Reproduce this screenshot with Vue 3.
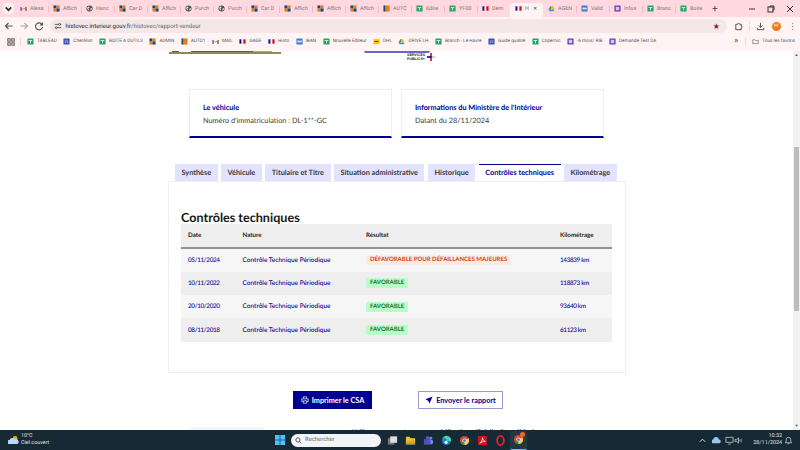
<script setup>
const tabs = [
  ['gmail', 'Alessa'], ['orange', 'Affich'], ['globe', 'Hanc'], ['orange', 'Car D'], ['orange', 'Affich'],
  ['globe', 'Purch'], ['globe', 'Purch'], ['orange', 'Car D'], ['orange', 'Affich'], ['orange', 'Affich'],
  ['orange', 'Affich'], ['auto', 'AUTC'], ['sheet', 'Edite'], ['sheet', 'YF00'], ['flag', 'Dem'],
  ['flag', 'H', true], ['drive', 'AGEN'], ['doc', 'Valid'], ['form', 'Infos'], ['sheet', 'Branc'], ['sheet', 'Boite']
]

const bookmarks = [
  ['sheet', 'TABLEAU'], ['cal', 'Checklist'], ['sheet', 'BOITE A OUTILS'], ['orange', 'ADMIN'], ['auto', 'AUTO1'],
  ['gmail', 'MAIL'], ['flag', 'GAGE'], ['flag', 'Histo'], ['doc', 'IBAN'], ['sheet', 'Nouvelle Editeur'],
  ['dhl', 'DHL'], ['drive', 'DRIVE LH'], ['sheet', 'Branch - Le Havre'], ['cal', 'Guide qualité'], ['sheet', 'Copernic'],
  ['form', '-6 mois/ RIB'], ['form', 'Demande Test DA']
]

const sections = [
  'Synthèse', 'Véhicule', 'Titulaire et Titre', 'Situation administrative', 'Historique', 'Contrôles techniques', 'Kilométrage'
]

const rows = [
  { date: '05/11/2024', result: 'DÉFAVORABLE POUR DÉFAILLANCES MAJEURES', bad: true, km: '143839 km' },
  { date: '10/11/2022', result: 'FAVORABLE', bad: false, km: '118873 km' },
  { date: '20/10/2020', result: 'FAVORABLE', bad: false, km: '93640 km' },
  { date: '08/11/2018', result: 'FAVORABLE', bad: false, km: '61123 km' }
]
</script>

<template>
  <div class="screen">
    <svg class="defs">
      <symbol id="i-gmail" viewBox="0 0 16 16">
        <path d="M1 13V4l7 5 7-5v9h-3V7.500L8 10.500 4 7.500V13z" fill="#e33b2e"/>
        <path d="M1 13V4l3 2.200V13z" fill="#4285f4"/>
        <path d="M15 13V4l-3 2.200V13z" fill="#34a853"/>
      </symbol>
      <symbol id="i-orange" viewBox="0 0 16 16">
        <rect x="1" y="1" width="7" height="7" fill="#0f4c81"/>
        <rect x="8" y="1" width="7" height="7" fill="#ee7d11"/>
        <rect x="1" y="8" width="7" height="7" fill="#ee7d11"/>
        <rect x="8" y="8" width="7" height="7" fill="#0f4c81"/>
      </symbol>
      <symbol id="i-auto" viewBox="0 0 16 16">
        <rect x="1" y="1" width="5" height="14" fill="#0f4c81"/>
        <rect x="6" y="1" width="9" height="14" fill="#ee7d11"/>
      </symbol>
      <symbol id="i-globe" viewBox="0 0 16 16">
        <circle cx="8" cy="8" r="7" fill="#4a4a4e"/>
        <path d="M3 5l4-2 1 3-3 2 2 2-1 3-3-4zM10 8l4-1-1 4-3 2z" fill="#e4e4e6"/>
      </symbol>
      <symbol id="i-sheet" viewBox="0 0 16 16">
        <rect x="1" y="1" width="14" height="14" rx="1" fill="#23a566"/>
        <path d="M4 5h8v2H9v5H7V7H4z" fill="#fff"/>
      </symbol>
      <symbol id="i-cal" viewBox="0 0 16 16">
        <rect x="1" y="1" width="14" height="14" rx="1" fill="#3f51b5"/>
        <path d="M4 6h8v1.500H4zM4 9h3v1.500H4zM9 9h3v1.500H9z" fill="#fff"/>
      </symbol>
      <symbol id="i-flag" viewBox="0 0 16 16">
        <rect x="1" y="3" width="5" height="10" fill="#14148c"/>
        <rect x="6" y="3" width="4" height="10" fill="#f4f4f8"/>
        <rect x="10" y="3" width="5" height="10" fill="#e1000f"/>
      </symbol>
      <symbol id="i-doc" viewBox="0 0 16 16">
        <rect x="1" y="1" width="14" height="14" rx="1" fill="#3e7bd6"/>
        <rect x="3" y="6" width="10" height="4" fill="#dbe7fa"/>
      </symbol>
      <symbol id="i-form" viewBox="0 0 16 16">
        <rect x="1" y="1" width="14" height="14" rx="1" fill="#673ab7"/>
        <rect x="4" y="4" width="8" height="8" fill="#d6c8f0"/>
      </symbol>
      <symbol id="i-dhl" viewBox="0 0 16 16">
        <rect x="1" y="2" width="14" height="12" rx="1" fill="#fc0"/>
        <rect x="3" y="7" width="10" height="2" fill="#d40511"/>
      </symbol>
      <symbol id="i-drive" viewBox="0 0 16 16">
        <path d="M5.500 2h5L6 10H1z" fill="#1fa463"/>
        <path d="M10.500 2L15 10h-5L5.500 2z" fill="#ffba00"/>
        <path d="M1 10h14l-2.500 4h-9z" fill="#4285f4"/>
      </symbol>
    </svg>

    <div class="tabstrip">
      <div class="tab-menu">
        <svg viewBox="0 0 10 10"><path d="M2.500 4L5 6.500 7.500 4" fill="none" stroke="#333" stroke-width="1.600"/></svg>
      </div>
      <div v-for="(tab, i) in tabs" :key="i" class="tab" :class="{ active: tab[2] }">
        <svg class="fav"><use :href="'#i-' + tab[0]"/></svg>
        <span class="tab-name">{{ tab[1] }}</span>
        <span v-if="tab[2]" class="tab-x">✕</span>
      </div>
      <span class="tab-plus">+</span>
      <div class="win-btns">
        <svg viewBox="0 0 10 10"><path d="M2 5h6" stroke="#333" fill="none"/></svg>
        <svg viewBox="0 0 10 10"><rect x="2" y="3" width="5" height="5" stroke="#333" fill="none"/><path d="M4 3V2h4v4H7" stroke="#333" fill="none"/></svg>
        <svg viewBox="0 0 10 10"><path d="M2 2l6 6M8 2l-6 6" stroke="#333" fill="none"/></svg>
      </div>
    </div>

    <div class="toolbar">
      <svg class="nav" viewBox="0 0 10 10"><path d="M8.500 5h-7M4.500 2L1.500 5l3 3" fill="none" stroke="#555" stroke-width="1.100"/></svg>
      <svg class="nav" viewBox="0 0 10 10"><path d="M1.500 5h7M5.500 2l3 3-3 3" fill="none" stroke="#aaa" stroke-width="1.100"/></svg>
      <svg class="nav" viewBox="0 0 10 10"><path d="M8 3.500A3.500 3.500 0 1 0 8.500 6M8.500 1.500v2.500H6" fill="none" stroke="#555" stroke-width="1.100"/></svg>
      <div class="omnibox">
        <svg class="site" viewBox="0 0 10 10"><path d="M1 3h5M8 3h1M1 7h1M4 7h5" stroke="#444" fill="none"/><circle cx="7" cy="3" r="1.200" fill="none" stroke="#444"/><circle cx="3" cy="7" r="1.200" fill="none" stroke="#444"/></svg>
        <span class="url">histovec.interieur.gouv.fr<span class="url-path">/histovec/rapport-vendeur</span></span>
        <span class="star">★</span>
      </div>
      <svg class="tool" viewBox="0 0 10 10"><path d="M2 2.500h2.200a1 1 0 0 1 2 0H8v2a1 1 0 0 1 0 2v2H2z" fill="none" stroke="#444"/></svg>
      <span class="tool-sep"></span>
      <svg class="tool dl" viewBox="0 0 10 10"><path d="M5 1v5M3 4l2 2 2-2M1.500 6.500v2h7v-2" fill="none" stroke="#444"/></svg>
      <span class="avatar">M</span>
      <span class="dots">⋮</span>
    </div>

    <div class="bookmarks">
      <svg class="apps" viewBox="0 0 10 10"><g fill="none" stroke="#555" stroke-width="1.200"><rect x="1" y="1" width="3" height="3"/><rect x="6" y="1" width="3" height="3"/><rect x="1" y="6" width="3" height="3"/><rect x="6" y="6" width="3" height="3"/></g></svg>
      <span class="bm-sep"></span>
      <div v-for="(bm, i) in bookmarks" :key="i" class="bm">
        <svg class="fav"><use :href="'#i-' + bm[0]"/></svg>
        <span>{{ bm[1] }}</span>
      </div>
      <span class="bm-more">»</span>
      <span class="bm-sep2"></span>
      <div class="bm">
        <svg class="folder" viewBox="0 0 10 10"><path d="M1 2.500h3l1 1h4v4.500H1z" fill="none" stroke="#555" stroke-width=".8"/></svg>
        <span>Tous les favoris</span>
      </div>
    </div>

    <div class="viewport">
      <main class="page">
        <div class="page-top">
          <div class="top-img"></div>
          <div class="top-right">
            <div class="top-line"></div>
            <div class="services">
              <span>SERVICES<br>PUBLICS+</span>
              <svg viewBox="0 0 10 10"><path d="M4 0h2v10H4z" fill="#e1000f"/><path d="M0 4h6v2H0z" fill="#000091"/><path d="M6 4h4v2H6z" fill="#f7a8b8"/></svg>
            </div>
          </div>
        </div>

        <div class="cards">
          <div class="card">
            <div class="card-title">Le véhicule</div>
            <div class="card-text">Numéro d'immatriculation : DL-1**-GC</div>
          </div>
          <div class="card">
            <div class="card-title">Informations du Ministère de l'Intérieur</div>
            <div class="card-text">Datant du 28/11/2024</div>
          </div>
        </div>

        <div class="sections">
          <div v-for="name in sections" :key="name" class="section" :class="{ current: name === 'Contrôles techniques' }">{{ name }}</div>
        </div>

        <section class="panel">
          <h2>Contrôles techniques</h2>
          <table>
            <thead>
              <tr>
                <th class="c-date">Date</th>
                <th class="c-nature">Nature</th>
                <th class="c-result">Résultat</th>
                <th>Kilométrage</th>
              </tr>
            </thead>
            <tbody>
              <tr v-for="row in rows" :key="row.date">
                <td class="num">{{ row.date }}</td>
                <td>Contrôle Technique Périodique</td>
                <td><span class="badge" :class="{ bad: row.bad }">{{ row.result }}</span></td>
                <td class="num">{{ row.km }}</td>
              </tr>
            </tbody>
          </table>
        </section>

        <div class="actions">
          <button class="btn primary">
            <svg viewBox="0 0 10 10"><path d="M3 3V1h4v2M2.500 7H1V3.500h8V7H7.500M3 6h4v3H3z" fill="none" stroke="#fff" stroke-width=".9"/></svg>
            Imprimer le CSA
          </button>
          <button class="btn outline">
            <svg viewBox="0 0 10 10"><path d="M9.500 .5L.5 4.200l3.500 1.600L5.600 9.500z" fill="#000091"/></svg>
            Envoyer le rapport
          </button>
        </div>

        <div class="page-foot">
          <span class="foot-box"></span>
          <span class="foot-text">Utilisez ce rapport pour une vérification officielle d'un véhicule</span>
        </div>
      </main>
      <div class="scrollbar">
        <span class="arrow">▲</span>
        <div class="track"><div class="thumb"></div></div>
        <span class="arrow">▼</span>
      </div>
    </div>

    <footer class="taskbar">
      <div class="weather">
        <svg viewBox="0 0 14 12"><circle cx="9" cy="4" r="3" fill="#f5a623"/><path d="M1 11a2.500 2.500 0 0 1 1-5 3.500 3.500 0 0 1 6.500-.5A3 3 0 0 1 12 11z" fill="#b9daf5"/></svg>
        <div>
          <div class="w-temp">10°C</div>
          <div>Ciel couvert</div>
        </div>
      </div>
      <div class="dock">
        <svg class="win" viewBox="0 0 10 10"><g fill="#4cc2ff"><rect width="4.700" height="4.700"/><rect x="5.300" width="4.700" height="4.700"/><rect y="5.300" width="4.700" height="4.700"/><rect x="5.300" y="5.300" width="4.700" height="4.700"/></g></svg>
        <div class="search">
          <svg viewBox="0 0 10 10"><circle cx="4.200" cy="4.200" r="3" fill="none" stroke="#333" stroke-width="1.100"/><path d="M6.500 6.500L9 9" stroke="#333" stroke-width="1.100"/></svg>
          <span>Rechercher</span>
        </div>
        <svg class="dock-i" viewBox="0 0 12 12"><rect x="1" y="3.500" width="7" height="7" fill="#777"/><rect x="3.500" y="1.500" width="7.500" height="7" fill="#ddd"/></svg>
        <svg class="dock-i" viewBox="0 0 12 12"><path d="M1 2h4l1 1.500h5V10.500H1z" fill="#f4c430"/><rect x="1" y="6" width="10" height="4.500" fill="#e8a90c"/><rect x="1" y="9.500" width="10" height="1" fill="#1976d2"/></svg>
        <svg class="dock-i" viewBox="0 0 12 12"><circle cx="8.500" cy="3.500" r="1.600" fill="#7b83eb"/><rect x="6.500" y="5.500" width="4.500" height="4.500" rx="1.500" fill="#7b83eb"/><circle cx="5" cy="3" r="2" fill="#5059c9"/><rect x="1" y="4.500" width="7" height="6" fill="#4b53bc"/></svg>
        <svg class="dock-i" viewBox="0 0 12 12"><circle cx="6" cy="6" r="5" fill="#1b7ec2"/><path d="M1.500 5a4.700 4.700 0 0 1 9.500 1.500H6a2 2 0 0 0-4.500-1.500z" fill="#4fd1a5"/><circle cx="5.500" cy="8" r="1.800" fill="#d8eefc"/></svg>
        <svg class="dock-i" viewBox="0 0 12 12"><circle cx="6" cy="6" r="5" fill="#db4437"/><path d="M6 6L1.700 8.500A5 5 0 0 0 6 11z" fill="#0f9d58"/><path d="M6 6v5a5 5 0 0 0 4.300-7.500z" fill="#ffcd40"/><circle cx="6" cy="6" r="2.300" fill="#fff"/><circle cx="6" cy="6" r="1.700" fill="#4285f4"/></svg>
        <svg class="dock-i" viewBox="0 0 12 12"><rect x="1" y="1" width="10" height="10" rx="1" fill="#c5161d"/><path d="M3 9c2-1 3-4 3-6 0 2 1 3 3 4-2 0-4 .5-6 2z" fill="none" stroke="#fff" stroke-width=".8"/></svg>
        <svg class="dock-i" viewBox="0 0 12 12"><ellipse cx="6" cy="6" rx="3.700" ry="5" fill="none" stroke="#e8202e" stroke-width="2"/></svg>
        <div class="chrome-on">
          <svg class="dock-i" viewBox="0 0 12 12"><circle cx="6" cy="6" r="5" fill="#db4437"/><path d="M6 6L1.700 8.500A5 5 0 0 0 6 11z" fill="#0f9d58"/><path d="M6 6v5a5 5 0 0 0 4.300-7.500z" fill="#ffcd40"/><circle cx="6" cy="6" r="2.300" fill="#fff"/><circle cx="6" cy="6" r="1.700" fill="#4285f4"/></svg>
          <span class="notif"></span>
        </div>
      </div>
      <div class="tray">
        <svg viewBox="0 0 10 10"><path d="M2 6.500L5 3.500l3 3" fill="none" stroke="#eee"/></svg>
        <svg class="t-cloud" viewBox="0 0 10 10"><path d="M1 8a2 2 0 0 1 .5-4 3 3 0 0 1 6 0 2 2 0 0 1 .5 4z" fill="#9cc7e8"/></svg>
        <svg class="t-mon" viewBox="0 0 10 10"><path d="M1 1.500h8v5.500H1zM3.500 9h3" fill="none" stroke="#ddd" stroke-width=".8"/></svg>
        <svg viewBox="0 0 10 10"><path d="M1 4h2l2-2v6L3 6H1z" fill="none" stroke="#ddd" stroke-width=".8"/><path d="M6.500 4v2M8 3v4" stroke="#ddd" stroke-width=".7"/></svg>
        <div class="clock">
          <div>10:32</div>
          <div>28/11/2024</div>
        </div>
        <svg viewBox="0 0 10 10"><path d="M5 1.500a2.500 2.500 0 0 1 2.500 2.500v2l1 1.500h-7L2.500 6V4A2.500 2.500 0 0 1 5 1.500zM4 8.500h2" fill="none" stroke="#ddd" stroke-width=".8"/></svg>
      </div>
    </footer>
  </div>
</template>

<style>
html, body {
  margin: 0;
  background: #fff;
}
</style>

<style scoped>
.defs {
  display: none;
}
.screen {
  width: 800px;
  height: 450px;
  overflow: hidden;
  display: flex;
  flex-direction: column;
  font-family: "Lato", "Liberation Sans", sans-serif;
  text-rendering: geometricPrecision;
}
.fav {
  width: 7px;
  height: 7px;
  flex: none;
}

/* chrome */
.tabstrip {
  height: 17px;
  background: #ffd8e0;
  display: flex;
  align-items: flex-end;
  padding-left: 3px;
  font-family: "Roboto", sans-serif;
  font-size: 5.400px;
  color: #777;
}
.tab-menu {
  width: 11px;
  height: 11px;
  margin: 0 1px 3px 0;
  background: #fff0f2;
  border-radius: 4px;
  flex: none;
}
.tab-menu svg {
  display: block;
  width: 11px;
  height: 11px;
}
.tab {
  width: 33px;
  height: 14px;
  flex: none;
  display: flex;
  align-items: center;
  gap: 3px;
  padding: 0 0 3px 5px;
  box-sizing: border-box;
  overflow: hidden;
  white-space: nowrap;
}
.tab + .tab {
  background: linear-gradient(#f3b9c6, #f3b9c6) no-repeat 0 3px / 1px 7px;
}
.tab.active,
.tab.active + .tab {
  background: none;
}
.tab.active {
  background: #fff4f3;
  border-radius: 4px 4px 0 0;
}
.tab-name {
  width: 14px;
  overflow: hidden;
}
.tab.active .tab-name {
  width: 5px;
}
.tab-x {
  font-size: 5px;
  color: #333;
}
.tab-plus {
  margin: 0 0 2px 4px;
  font-size: 10px;
  color: #444;
}
.win-btns {
  margin-left: auto;
  display: flex;
  gap: 9px;
  align-self: center;
  padding-right: 5px;
}
.win-btns svg {
  width: 10px;
  height: 10px;
}
.toolbar {
  height: 18px;
  background: #fff4f3;
  display: flex;
  align-items: center;
  padding-left: 4px;
}
.nav {
  width: 10px;
  height: 10px;
  margin-right: 5px;
  flex: none;
}
.omnibox {
  width: 677px;
  height: 14px;
  margin-left: 1px;
  border-radius: 7px;
  background: #f5e6e8;
  display: flex;
  align-items: center;
  flex: none;
  box-sizing: border-box;
  padding: 0 7px 0 4px;
}
.site {
  width: 8px;
  height: 8px;
  margin-right: 3.500px;
}
.url {
  font-family: "Roboto", sans-serif;
  font-size: 6px;
  color: #222;
}
.url-path {
  color: #666;
}
.star {
  margin-left: auto;
  font-size: 8px;
  color: #7d2544;
}
.tool {
  width: 9px;
  height: 9px;
  margin-left: 7px;
  flex: none;
}
.tool-sep {
  width: 1px;
  height: 9px;
  background: #e5d5d5;
  margin-left: 6px;
}
.tool.dl {
  margin-left: 6px;
}
.avatar {
  width: 9px;
  height: 9px;
  margin-left: 6.500px;
  border-radius: 50%;
  background: #ee7a11;
  color: #ffe;
  font-size: 5px;
  line-height: 9px;
  text-align: center;
}
.dots {
  margin-left: 8px;
  font-size: 8px;
  color: #444;
}
.bookmarks {
  height: 16px;
  box-sizing: border-box;
  background: #fff4f3;
  display: flex;
  align-items: center;
  gap: 6.500px;
  padding: 0 5px 3px 7px;
  font-family: "Roboto", sans-serif;
  font-size: 4.700px;
  color: #555;
  white-space: nowrap;
}
.bm-sep,
.bm-sep2,
.apps,
.bm,
.bm-more {
  flex: none;
}
.apps {
  width: 8px;
  height: 8px;
}
.bm-sep {
  width: 1px;
  height: 8px;
  background: #ecd9d9;
  margin: 0 -.5px 0 -1.500px;
}
.bm {
  display: flex;
  align-items: center;
  gap: 3px;
}
.bm-more {
  margin-left: auto;
  font-size: 9px;
  line-height: 9px;
}
.bm-sep2 {
  width: 1px;
  height: 8px;
  background: #ecd9d9;
}
.folder {
  width: 7px;
  height: 7px;
}

/* page */
.viewport {
  flex: 1;
  min-height: 0;
  display: flex;
  background: #fff;
}
.page {
  flex: 1;
  min-width: 0;
  overflow: hidden;
  color: #3a3a3a;
}
.page-top {
  height: 38px;
  display: flex;
  align-items: flex-start;
  padding-left: 169px;
}
.top-img {
  width: 112px;
  height: 3px;
  background:
    linear-gradient(90deg, transparent 3px, #555 3px, #555 10px, transparent 10px, transparent 22px, #6d5a48 22px, #6d5a48 84px, #a3a3cf 84px, #a3a3cf 103px, transparent 103px) top / 100% 1px no-repeat,
    linear-gradient(#8c8c55, #8c8c55) bottom / 100% 2px no-repeat;
}
.top-right {
  margin-left: 83px;
}
.top-line {
  width: 66px;
  height: 2px;
  border-radius: 0 0 3px 3px;
  background: #6a66c4;
}
.services {
  margin: 0 0 0 43px;
  display: flex;
  align-items: center;
  gap: 2px;
  font-family: "Liberation Sans", sans-serif;
  font-size: 3.600px;
  line-height: 4.200px;
  font-weight: 700;
  color: #222;
  white-space: nowrap;
}
.services svg {
  width: 8px;
  height: 8px;
}
.cards {
  display: flex;
  gap: 9px;
  padding-left: 189px;
}
.card {
  width: 203px;
  height: 49px;
  box-sizing: border-box;
  border: 1px solid #eee;
  border-bottom: 2px solid #000091;
  padding: 11px 0 0 13px;
  font-size: 7.300px;
  line-height: 13px;
}
.card-title {
  color: #000091;
  font-weight: 700;
}
.sections {
  margin-top: 26px;
  padding-left: 175px;
  display: flex;
  gap: 3.500px;
}
.section {
  height: 17px;
  line-height: 17px;
  padding: 0 6.500px;
  background: #e3e3fd;
  font-size: 7.300px;
  font-weight: 700;
  color: #3a3a3a;
  white-space: nowrap;
}
.section.current {
  background: #fff;
  color: #000091;
  border-top: 1px solid #000091;
  height: 17px;
  line-height: 16px;
  box-sizing: border-box;
  position: relative;
  z-index: 1;
}
.panel {
  margin-left: 168px;
  width: 458px;
  height: 192px;
  box-sizing: border-box;
  border: 1px solid #eee;
  padding: 29px 12px 0;
}
h2 {
  margin: 0;
  height: 13px;
  font-size: 12.600px;
  line-height: 13px;
  font-weight: 700;
  color: #161616;
}
table {
  width: 431px;
  border-collapse: collapse;
  table-layout: fixed;
  font-size: 6.500px;
}
th {
  height: 22.500px;
  padding: 0 0 0 7px;
  background: #eee;
  border-bottom: 2px solid #929292;
  text-align: left;
  font-weight: 700;
  font-size: 6.200px;
  color: #222;
}
.c-date {
  width: 47.500px;
}
.c-nature {
  width: 116.500px;
}
.c-result {
  width: 187px;
}
td {
  height: 23.300px;
  padding: 0 0 0 7px;
  color: #000091;
  font-weight: 500;
  white-space: nowrap;
}
td.num {
  font-size: 6.300px;
  letter-spacing: -.33px;
}
tbody tr:nth-child(odd) {
  background: #f6f6f6;
}
tbody tr:nth-child(even) {
  background: #eee;
}
.badge {
  display: inline-block;
  padding: 0 4px;
  height: 10px;
  line-height: 10px;
  border-radius: 1.500px;
  background: #b8fec9;
  color: #18753c;
  font-size: 6px;
  font-weight: 700;
}
.badge.bad {
  background: #ffe9e6;
  color: #ce4a0f;
}
.actions {
  margin-top: 18px;
  display: flex;
  gap: 46px;
  padding-left: 293px;
}
.btn {
  height: 18px;
  padding: 0;
  display: flex;
  align-items: center;
  justify-content: center;
  gap: 3px;
  font-family: inherit;
  font-size: 7.300px;
  font-weight: 700;
  border: 1px solid #000091;
  box-sizing: border-box;
}
.btn svg {
  width: 8px;
  height: 8px;
}
.primary {
  width: 79px;
  background: #000091;
  color: #fff;
}
.outline {
  width: 85px;
  background: #fff;
  border-color: #9a9ad6;
  color: #000091;
}
.page-foot {
  margin-top: 18px;
  height: 3px;
  overflow: hidden;
  display: flex;
  padding-left: 190px;
}
.foot-box {
  width: 75px;
  height: 3px;
  background: #f6f6f6;
}
.foot-text {
  margin: 0 0 0 87px;
  font-size: 6.800px;
  line-height: 10px;
  color: #3a3a3a;
  white-space: nowrap;
}
.scrollbar {
  width: 7px;
  flex: none;
  display: flex;
  flex-direction: column;
  align-items: center;
  background: #f1f1f1;
  color: #555;
  font-size: 4px;
}
.arrow {
  height: 8px;
  line-height: 8px;
}
.track {
  flex: 1;
  width: 100%;
  padding-top: 88px;
  box-sizing: border-box;
}
.thumb {
  width: 5.500px;
  height: 164px;
  margin-left: .5px;
  background: #bdbdbd;
}

/* taskbar */
.taskbar {
  height: 20px;
  background: #152a35;
  display: flex;
  align-items: center;
  font-family: "Roboto", sans-serif;
  color: #e6e6e6;
  font-size: 5.400px;
  line-height: 7px;
}
.weather {
  width: 275px;
  flex: none;
  box-sizing: border-box;
  padding-left: 8px;
  display: flex;
  align-items: center;
  gap: 2px;
}
.weather svg {
  width: 11px;
  height: 10px;
}
.dock {
  display: flex;
  align-items: center;
  gap: 7px;
}
.win {
  width: 10px;
  height: 10px;
}
.search {
  width: 90px;
  height: 13px;
  margin: 0 -1px 0 -1px;
  border-radius: 7px;
  background: #f2f4f7;
  color: #666;
  display: flex;
  align-items: center;
  gap: 3px;
  padding-left: 4px;
  box-sizing: border-box;
  font-size: 5.900px;
}
.search svg {
  width: 7px;
  height: 7px;
}
.dock-i {
  width: 11px;
  height: 11px;
  display: block;
  flex: none;
}
.chrome-on {
  position: relative;
  padding: 3px 3px 4px;
  margin: 0 0 0 -3px;
  background: #24393f;
  border-radius: 2px;
  border-bottom: 1px solid #4cc2ff;
  box-sizing: border-box;
}
.notif {
  position: absolute;
  right: 2px;
  top: 1px;
  width: 5px;
  height: 5px;
  border-radius: 50%;
  background: #ee6a1f;
}
.tray {
  margin-left: auto;
  display: flex;
  align-items: center;
  padding-right: 7.500px;
}
.tray svg {
  width: 9px;
  height: 9px;
}
.t-cloud,
.t-mon {
  margin-left: 4.500px;
}
.clock {
  margin: 0 1.500px 0 10px;
  text-align: right;
}
</style>
